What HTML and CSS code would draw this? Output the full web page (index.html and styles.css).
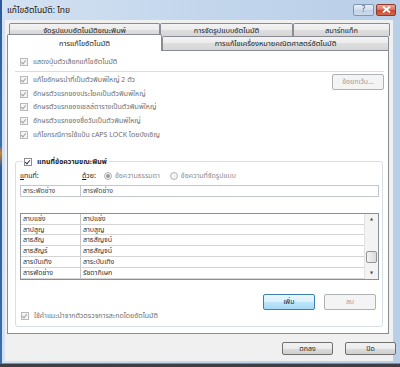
FILE: index.html
```html
<!DOCTYPE html>
<html lang="th">

<head>
    <meta charset="UTF-8">
    <title>แก้ไขอัตโนมัติ: ไทย</title>
    <link rel="stylesheet" href="styles.css">
</head>

<body>
    <div class="screen">
        <div class="edge"></div>
        <div class="window">
            <div class="titlebar">
                <span class="title">แก้ไขอัตโนมัติ: ไทย</span>
                <div class="caption">
                    <span class="cap help">?</span>
                    <span class="cap close">
                        <svg width="9" height="7" viewBox="0 0 9 7"><path d="M1 0.5 L8 6.5 M8 0.5 L1 6.5" stroke="#fff" stroke-width="1.8"/></svg>
                    </span>
                </div>
            </div>

            <div class="client">
                <div class="tabs">
                    <div class="tab-row back">
                        <div class="tab w1">จัดรูปแบบอัตโนมัติขณะพิมพ์</div>
                        <div class="tab w2">การจัดรูปแบบอัตโนมัติ</div>
                        <div class="tab w3">สมาร์ทแท็ก</div>
                    </div>
                    <div class="tab-row front">
                        <div class="tab active">การแก้ไขอัตโนมัติ</div>
                        <div class="tab w5">การแก้ไขเครื่องหมายคณิตศาสตร์อัตโนมัติ</div>
                    </div>
                </div>

                <div class="panel">
                    <div class="opt"><span class="cb on"></span>แสดงปุ่มตัวเลือกแก้ไขอัตโนมัติ</div>
                    <div class="sep"></div>

                    <div class="opts-wrap">
                        <div class="opts">
                            <div class="opt"><span class="cb on"></span>แก้ไขอักษรนำที่เป็นตัวพิมพ์ใหญ่ 2 ตัว</div>
                            <div class="opt"><span class="cb on"></span>อักษรตัวแรกของประโยคเป็นตัวพิมพ์ใหญ่</div>
                            <div class="opt"><span class="cb on"></span>อักษรตัวแรกของเซลล์ตารางเป็นตัวพิมพ์ใหญ่</div>
                            <div class="opt"><span class="cb on"></span>อักษรตัวแรกของชื่อวันเป็นตัวพิมพ์ใหญ่</div>
                            <div class="opt"><span class="cb on"></span>แก้ไขกรณีการใช้แป้น cAPS LOCK โดยบังเอิญ</div>
                        </div>
                        <div class="btn disabled except">ข้อยกเว้น...</div>
                    </div>

                    <fieldset class="group">
                        <legend class="legend"><span class="cb on dark"></span>แทนที่ข้อความขณะพิมพ์</legend>

                        <div class="labels">
                            <span class="lbl-replace"><u>แ</u>ทนที่:</span>
                            <span class="lbl-with"><u>ด้</u>วย:</span>
                            <span class="radio sel"></span><span class="muted">ข้อความธรรมดา</span>
                            <span class="radio"></span><span class="muted">ข้อความที่จัดรูปแบบ</span>
                        </div>

                        <div class="fields">
                            <div class="field c1">สาระพัดช่าง</div>
                            <div class="field c2">สารพัดช่าง</div>
                        </div>

                        <div class="list">
                            <div class="rows">
                                <div class="row"><span class="c1">สาบแช่ง</span><span class="c2">สาปแช่ง</span></div>
                                <div class="row"><span class="c1">สาปสูญ</span><span class="c2">สาบสูญ</span></div>
                                <div class="row"><span class="c1">สาธสัญ</span><span class="c2">สาธสัญจน์</span></div>
                                <div class="row"><span class="c1">สาธสัญร์</span><span class="c2">สาธสัญจน์</span></div>
                                <div class="row"><span class="c1">สารบันเทิง</span><span class="c2">สาระบันเทิง</span></div>
                                <div class="row"><span class="c1">สารพัดช่าง</span><span class="c2">รัชดาภิเษก</span></div>
                            </div>
                            <div class="scroll">
                                <span class="arrow">▲</span>
                                <span class="track"><span class="thumb"></span></span>
                                <span class="arrow">▼</span>
                            </div>
                        </div>

                        <div class="list-btns">
                            <div class="btn focus">เพิ่ม</div>
                            <div class="btn disabled">ลบ</div>
                        </div>

                        <div class="opt last"><span class="cb on"></span>ใช้คำแนะนำจากตัวตรวจการสะกดโดยอัตโนมัติ</div>
                    </fieldset>
                </div>

                <div class="dlg-btns">
                    <div class="btn big">ตกลง</div>
                    <div class="btn big">ปิด</div>
                </div>
            </div>
        </div>
    </div>
</body>

</html>
```

FILE: styles.css
```css
* {
    box-sizing: border-box;
}

body {
    margin: 0;
    width: 400px;
    height: 367px;
    overflow: hidden;
    background: #3d3f44;
    font-family: Tahoma, "Noto Sans Thai", "DejaVu Sans", "Noto Sans", sans-serif;
    font-size: 7px;
    color: #1e1e1e;
}

.screen {
    display: flex;
    height: 364px;
}

.edge {
    width: 2px;
    background: linear-gradient(#2b5a9c, #3d6fb3 40%, #c9822c 42%, #2b5a9c 46%, #3b6db0);
}

.window {
    flex: 1;
    display: flex;
    flex-direction: column;
    padding: 0 7px 2px 3px;
    background: linear-gradient(90deg, #d3e2f2, #c3d6ec 50%, #b9cfe8);
    border-bottom: 1px solid #38a6d4;
}

/* title bar */
.titlebar {
    height: 20px;
    margin-right: -3px;
    display: flex;
    align-items: center;
    justify-content: space-between;
    padding-left: 2px;
}

.title {
    font-size: 8.5px;
    color: #151515;
}

.caption {
    display: flex;
    gap: 2px;
    margin-top: -1px;
}

.cap {
    width: 21px;
    height: 12px;
    display: flex;
    align-items: center;
    justify-content: center;
    border-radius: 2px;
    font-size: 8px;
}

.help {
    border: 1px solid #8096b2;
    background: linear-gradient(#e7eef7, #d2deec 50%, #c2d2e6 50%, #ccdaeb);
    color: #555b66;
}

.close {
    width: 20px;
    border: 1px solid #8d3b2c;
    background: linear-gradient(#e9a695, #d7715b 50%, #c6432b 50%, #d56a4e);
}

/* client area */
.client {
    flex: 1;
    background: #f0f0f0;
    padding-top: 3px;
    display: flex;
    flex-direction: column;
}

.tabs {
    margin-left: 2px;
    font-size: 7.4px;
}

.tab-row {
    display: flex;
}

.tab {
    height: 13px;
    border: 1px solid #898c95;
    border-bottom: none;
    border-radius: 2px 2px 0 0;
    background: linear-gradient(#f3f3f3, #ebebeb 50%, #dedede 50%, #d6d6d6);
    display: flex;
    align-items: center;
    justify-content: center;
    white-space: nowrap;
}

.back {
    padding-left: 2px;
}

.w1 { width: 151px; }
.w2 { width: 133px; }
.w3 { width: 97px; }
.w5 { width: 227px; height: 14px; }

.tab.active {
    width: 155px;
    height: 17px;
    margin-top: -2px;
    margin-bottom: -1px;
    background: #fff;
    position: relative;
    z-index: 1;
}

.front {
    align-items: flex-end;
}

.panel {
    height: 284px;
    margin: 0 4px 0 2px;
    background: #fff;
    border: 1px solid #898c95;
    padding: 4px 4px 0 7px;
}

.opt {
    height: 14px;
    display: flex;
    align-items: center;
    gap: 5px;
    padding-left: 5px;
    color: #6f6f6f;
    white-space: nowrap;
}

.cb {
    width: 8px;
    height: 8px;
    flex: none;
    border: 1px solid #b9b9b9;
    background: #f4f4f4;
    position: relative;
}

.cb.on::after {
    content: "";
    position: absolute;
    left: 1px;
    top: 0;
    width: 2px;
    height: 4px;
    border: solid #a3a3a3;
    border-width: 0 1px 1px 0;
    transform: rotate(40deg);
}

.cb.dark {
    border-color: #8e8f8f;
    background: #fff;
}

.cb.dark::after {
    border-color: #2a3d6a;
}

.sep {
    height: 1px;
    margin: 2px 0 1px;
    background: #d5dfe5;
}

.opts-wrap {
    display: flex;
    justify-content: space-between;
}

.opts .opt {
    height: 13.75px;
}

.btn {
    display: flex;
    align-items: center;
    justify-content: center;
    height: 16px;
    width: 52px;
    border: 1px solid #707070;
    border-radius: 2px;
    background: linear-gradient(#f2f2f2, #ebebeb 50%, #dddddd 50%, #cfcfcf);
    color: #1e1e1e;
}

.btn.disabled {
    border-color: #adb2b5;
    background: #f4f4f4;
    color: #a0a0a0;
}

.except {
    margin-top: 1px;
}

.btn.focus {
    border-color: #3c7fb1;
    background: linear-gradient(#eaf6fd, #d9f0fc 50%, #bee6fd 50%, #a7d9f5);
}

/* group box */
.group {
    margin: 13px 1px 0 0;
    padding: 0 3px 3px 4px;
    border: 1px solid #d5dfe5;
    border-radius: 3px;
    min-width: 0;
}

.legend {
    display: flex;
    align-items: center;
    gap: 5px;
    height: 14px;
    margin-left: 3px;
    padding: 0 2px 0 1px;
    color: #1e1e1e;
    font-weight: bold;
}

.labels {
    height: 14px;
    display: flex;
    align-items: center;
    white-space: nowrap;
    padding-top: 1px;
}

.lbl-replace {
    width: 62px;
}

.lbl-with {
    width: 22px;
}

.muted {
    color: #8a8a8a;
}

.radio {
    width: 8px;
    height: 8px;
    border: 1px solid #b4b4b4;
    border-radius: 50%;
    background: #f4f4f4;
    margin-right: 3px;
    display: flex;
    align-items: center;
    justify-content: center;
}

.radio.sel::after {
    content: "";
    width: 4px;
    height: 4px;
    border-radius: 50%;
    background: #9c9c9c;
}

.muted + .radio {
    margin-left: 10px;
}

.fields {
    display: flex;
    margin-top: 2px;
    height: 12px;
}

.field {
    border: 1px solid #c3c6cc;
    display: flex;
    align-items: center;
    padding-left: 2px;
    color: #4a4a4a;
}

.field.c1 {
    width: 61px;
}

.field.c2 {
    flex: 1;
    border-left: none;
}

.list {
    display: flex;
    height: 67px;
    margin-top: 16px;
    border: 1px solid #8a8e95;
}

.rows {
    flex: 1;
}

.row {
    display: flex;
    height: 10.83px;
    border-bottom: 1px solid #d4d4d4;
    color: #333;
}

.row span {
    display: flex;
    align-items: center;
    padding-left: 2px;
}

.row .c1 {
    width: 60px;
    border-right: 1px solid #c6c6c6;
}

.scroll {
    width: 14px;
    display: flex;
    flex-direction: column;
    background: #f3f3f3;
    border-left: 1px solid #e2e2e2;
}

.arrow {
    height: 11px;
    display: flex;
    align-items: center;
    justify-content: center;
    font-size: 4px;
    color: #4d4d4d;
}

.track {
    flex: 1;
    display: flex;
    flex-direction: column;
    justify-content: flex-end;
    padding: 0 1px 5px;
}

.thumb {
    height: 12px;
    border: 1px solid #959595;
    border-radius: 2px;
    background: linear-gradient(90deg, #f2f2f2, #dcdcdc);
}

.list-btns {
    display: flex;
    justify-content: flex-end;
    gap: 9px;
    margin-top: 14px;
    padding-right: 3px;
}

.opt.last {
    height: 13px;
    padding-left: 1px;
}

/* bottom buttons */
.dlg-btns {
    display: flex;
    justify-content: flex-end;
    gap: 12px;
    margin-top: 8px;
    margin-right: -3px;
}

.btn.big {
    width: 51px;
    height: 13px;
}
```
